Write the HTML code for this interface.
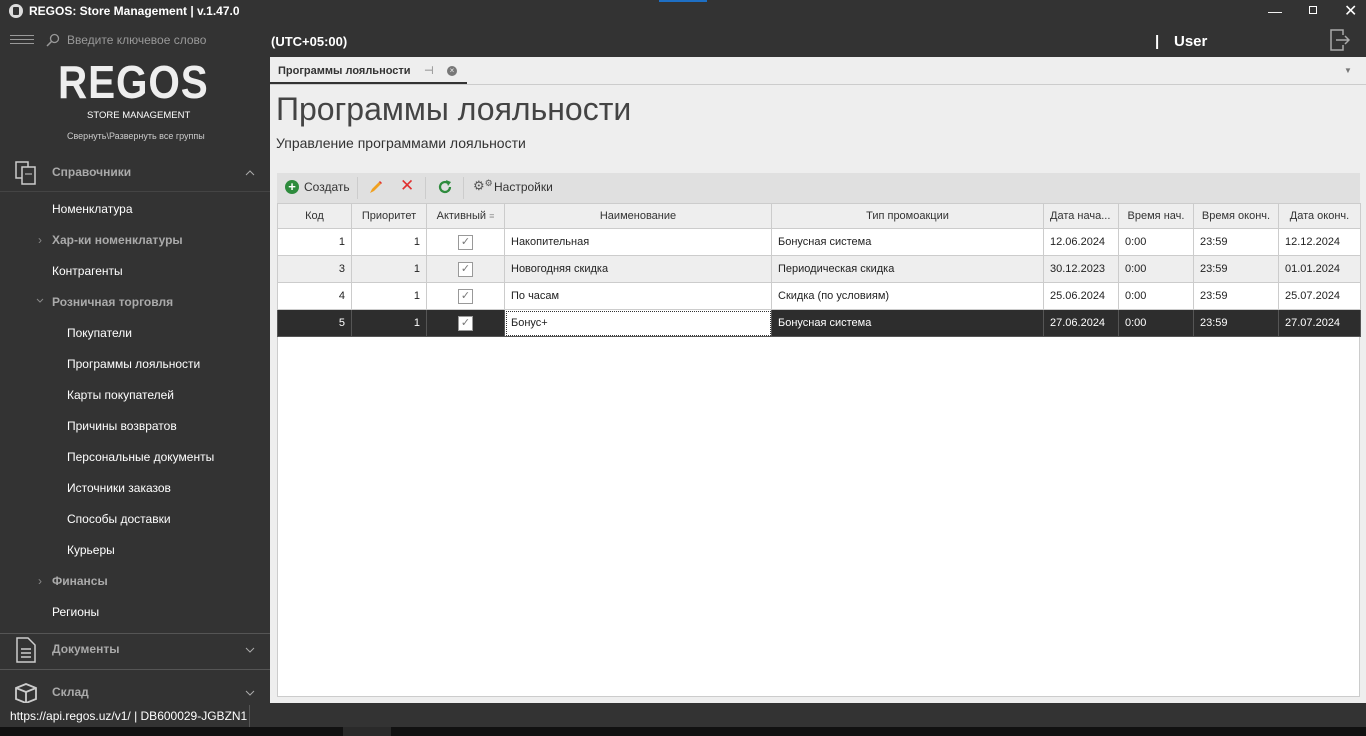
<!DOCTYPE html>
<html><head><meta charset="utf-8"><style>
*{margin:0;padding:0;box-sizing:border-box}
body{width:1366px;height:736px;overflow:hidden;background:#333;font-family:"Liberation Sans",sans-serif;position:relative;font-size:12px}
.a{position:absolute;white-space:nowrap}
.side{left:0;top:22px;width:270px;height:681px;background:#333}
.si{position:absolute;left:52px;color:#fff;font-size:12px}
.sg{color:#aaa;font-weight:bold}
.sub{left:67px}
.content{left:270px;top:57px;width:1096px;height:646px;background:#eee}
table{border-collapse:collapse;position:absolute;left:277px;top:203px;width:1083px;table-layout:fixed;font-size:11px;color:#222}
td,th{border:1px solid #ccc;height:27px;padding:0 6px;overflow:hidden;white-space:nowrap}
th{font-weight:normal;height:25px;background:#eee;color:#333}
tr.w td{background:#fff}
tr.g td{background:#eee}
tr.s td{background:#2d2d2d;color:#fff;border-color:#555}
.r{text-align:right}
.c{text-align:center}
.cb{display:inline-block;width:15px;height:15px;border:1px solid #999;background:#fff;color:#777;font-size:11px;line-height:13px;text-align:center;vertical-align:middle}
</style></head><body>
<div class="side a"></div>
<div class="a" style="left:0;top:0;width:1366px;height:22px;background:#333"></div>
<div class="a" style="left:659px;top:0;width:48px;height:2px;background:#1e6fc4"></div>
<div class="a" style="left:9px;top:4px;width:14px;height:14px;border-radius:50%;background:#ddd"></div>
<div class="a" style="left:13px;top:7px;width:6px;height:8px;background:#333;border-radius:1px"></div>
<div class="a" style="left:29px;top:4px;color:#fff;font-weight:bold;font-size:12px">REGOS: Store Management | v.1.47.0</div>
<div class="a" style="left:1268px;top:0;color:#fff;font-size:14px;line-height:22px">&#8212;</div>
<div class="a" style="left:1309px;top:6px;width:8px;height:8px;border:1.5px solid #fff"></div>
<div class="a" style="left:1344px;top:1px;color:#fff;font-size:16px">&#10005;</div>
<div class="a" style="left:10px;top:35px;width:24px;height:1px;background:#999;box-shadow:0 4px 0 #999,0 8px 0 #999"></div>
<svg class="a" style="left:46px;top:33px" width="14" height="14"><circle cx="8.5" cy="5.5" r="4" fill="none" stroke="#999" stroke-width="1.3"/><line x1="5.5" y1="8.5" x2="1" y2="13" stroke="#999" stroke-width="1.5"/></svg>
<div class="a" style="left:67px;top:33px;color:#999;font-size:12px">Введите ключевое слово</div>
<div class="a" style="left:58px;top:58px;color:#eee;font-size:46px;font-weight:bold;letter-spacing:1px;line-height:48px;transform:scaleX(0.88);transform-origin:left">REGOS</div>
<div class="a" style="left:87px;top:110px;color:#fff;font-size:9.5px">STORE MANAGEMENT</div>
<div class="a" style="left:67px;top:131px;color:#ccc;font-size:9px">Свернуть\Развернуть все группы</div>
<svg class="a" style="left:15px;top:161px" width="22" height="24"><rect x="1" y="1" width="12" height="16" fill="none" stroke="#ccc" stroke-width="1.5"/><rect x="7" y="6" width="13" height="17" fill="#333" stroke="#ccc" stroke-width="1.5"/><line x1="10" y1="13" x2="17" y2="13" stroke="#ccc"/></svg>
<div class="si sg" style="top:165px;font-size:12px">Справочники</div>
<svg class="a" style="left:245px;top:170px" width="10" height="6"><path d="M1 5L5 1L9 5" fill="none" stroke="#aaa"/></svg>
<div class="a" style="left:0;top:191px;width:270px;height:1px;background:#444"></div>
<div class="si" style="top:202px">Номенклатура</div>
<div class="a" style="left:38px;top:233px;color:#888">›</div>
<div class="si sg" style="top:233px">Хар-ки номенклатуры</div>
<div class="si" style="top:264px">Контрагенты</div>
<svg class="a" style="left:36px;top:298px" width="8" height="5"><path d="M1 1L4 4L7 1" fill="none" stroke="#888"/></svg>
<div class="si sg" style="top:295px">Розничная торговля</div>
<div class="si sub" style="top:326px">Покупатели</div>
<div class="si sub" style="top:357px">Программы лояльности</div>
<div class="si sub" style="top:388px">Карты покупателей</div>
<div class="si sub" style="top:419px">Причины возвратов</div>
<div class="si sub" style="top:450px">Персональные документы</div>
<div class="si sub" style="top:481px">Источники заказов</div>
<div class="si sub" style="top:512px">Способы доставки</div>
<div class="si sub" style="top:543px">Курьеры</div>
<div class="a" style="left:38px;top:574px;color:#888">›</div>
<div class="si sg" style="top:574px">Финансы</div>
<div class="si" style="top:605px">Регионы</div>
<div class="a" style="left:0;top:633px;width:270px;height:1px;background:#555"></div>
<svg class="a" style="left:16px;top:637px" width="20" height="26"><path d="M1 1H12L19 8V25H1Z" fill="none" stroke="#ccc" stroke-width="1.5"/><path d="M5 12H15M5 16H15M5 20H15" stroke="#ccc" stroke-width="1.5"/></svg>
<div class="si sg" style="top:642px">Документы</div>
<svg class="a" style="left:245px;top:647px" width="10" height="6"><path d="M1 1L5 5L9 1" fill="none" stroke="#aaa"/></svg>
<div class="a" style="left:0;top:669px;width:270px;height:1px;background:#555"></div>
<svg class="a" style="left:14px;top:682px" width="24" height="22"><path d="M2 6L12 2L22 6V17L12 21L2 17Z M2 6L12 10L22 6 M12 10V21" fill="none" stroke="#ccc" stroke-width="1.8"/></svg>
<div class="si sg" style="top:685px">Склад</div>
<svg class="a" style="left:245px;top:690px" width="10" height="6"><path d="M1 1L5 5L9 1" fill="none" stroke="#aaa"/></svg>
<div class="a" style="left:271px;top:34px;color:#fff;font-weight:bold;font-size:13px">(UTC+05:00)</div>
<div class="a" style="left:1155px;top:33px;color:#fff;font-size:15px;font-weight:bold">|</div>
<div class="a" style="left:1174px;top:33px;color:#fff;font-size:15px;font-weight:bold">User</div>
<svg class="a" style="left:1330px;top:29px" width="20" height="22"><path d="M13 6V1H1V21H13V16" fill="none" stroke="#aaa" stroke-width="1.5"/><path d="M6 11H19M15 7L19 11L15 15" fill="none" stroke="#aaa" stroke-width="1.5"/></svg>
<div class="content a"></div>
<div class="a" style="left:270px;top:84px;width:1096px;height:1px;background:#ccc"></div>
<div class="a" style="left:270px;top:82px;width:197px;height:2px;background:#333"></div>
<div class="a" style="left:278px;top:65px;color:#333;font-weight:bold;font-size:11px">Программы лояльности</div>
<div class="a" style="left:424px;top:64px;color:#777;font-size:11px">&#8867;</div>
<div class="a" style="left:447px;top:66px;width:10px;height:10px;border-radius:50%;background:#777;color:#eee;font-size:8px;line-height:10px;text-align:center">×</div>
<div class="a" style="left:1344px;top:66px;color:#777;font-size:8px">&#9660;</div>
<div class="a" style="left:276px;top:91px;color:#444;font-size:32px">Программы лояльности</div>
<div class="a" style="left:276px;top:135px;color:#333;font-size:14px">Управление программами лояльности</div>
<div class="a" style="left:277px;top:173px;width:1083px;height:30px;background:#e0e0e0"></div>
<div class="a" style="left:285px;top:180px;width:14px;height:14px;border-radius:50%;background:#2e8b3d;color:#fff;font-weight:bold;font-size:13px;line-height:14px;text-align:center">+</div>
<div class="a" style="left:304px;top:180px;color:#333;font-size:12px">Создать</div>
<div class="a" style="left:357px;top:177px;width:1px;height:22px;background:#ccc"></div>
<svg class="a" style="left:369px;top:180px" width="14" height="14"><path d="M1 13L3 9L10 2L12 4L5 11Z" fill="#f0a020"/><path d="M10 2L12 4L13 3L11 1Z" fill="#e03030"/></svg>
<div class="a" style="left:400px;top:176px;color:#e03030;font-size:17px">&#10005;</div>
<div class="a" style="left:425px;top:177px;width:1px;height:22px;background:#ccc"></div>
<svg class="a" style="left:437px;top:179px" width="16" height="16"><path d="M13 8A5 5 0 1 1 11 4" fill="none" stroke="#2e8b3d" stroke-width="2.2"/><path d="M9 1L14 3L11 7Z" fill="#2e8b3d"/></svg>
<div class="a" style="left:463px;top:177px;width:1px;height:22px;background:#ccc"></div>
<div class="a" style="left:473px;top:178px;color:#555;font-size:13px">&#9881;<span style="font-size:9px;vertical-align:top">&#9881;</span></div>
<div class="a" style="left:494px;top:180px;color:#333;font-size:12px">Настройки</div>
<div class="a" style="left:277px;top:203px;width:1083px;height:494px;background:#fff;border:1px solid #ccc"></div>
<table>
<colgroup><col style="width:74px"><col style="width:75px"><col style="width:78px"><col style="width:267px"><col style="width:272px"><col style="width:75px"><col style="width:75px"><col style="width:85px"><col style="width:82px"></colgroup>
<tr><th>Код</th><th>Приоритет</th><th>Активный <span style="color:#999;font-size:9px">&#8801;</span></th><th>Наименование</th><th>Тип промоакции</th><th style="text-align:left">Дата нача...</th><th>Время нач.</th><th>Время оконч.</th><th>Дата оконч.</th></tr>
<tr class="w"><td class="r">1</td><td class="r">1</td><td class="c"><span class="cb">✓</span></td><td>Накопительная</td><td>Бонусная система</td><td>12.06.2024</td><td>0:00</td><td>23:59</td><td>12.12.2024</td></tr>
<tr class="g"><td class="r">3</td><td class="r">1</td><td class="c"><span class="cb">✓</span></td><td>Новогодняя скидка</td><td>Периодическая скидка</td><td>30.12.2023</td><td>0:00</td><td>23:59</td><td>01.01.2024</td></tr>
<tr class="w"><td class="r">4</td><td class="r">1</td><td class="c"><span class="cb">✓</span></td><td>По часам</td><td>Скидка (по условиям)</td><td>25.06.2024</td><td>0:00</td><td>23:59</td><td>25.07.2024</td></tr>
<tr class="s"><td class="r">5</td><td class="r">1</td><td class="c"><span class="cb">✓</span></td><td style="background:#fff;color:#222;outline:1px dotted #333;outline-offset:-2px">Бонус+</td><td>Бонусная система</td><td>27.06.2024</td><td>0:00</td><td>23:59</td><td>27.07.2024</td></tr>
</table>
<div class="a" style="left:0;top:703px;width:1366px;height:24px;background:#333"></div>
<div class="a" style="left:10px;top:709px;color:#fff;font-size:12px">https://api.regos.uz/v1/ | DB600029-JGBZN1</div>
<div class="a" style="left:249px;top:705px;width:1px;height:22px;background:#555"></div>
<div class="a" style="left:0;top:727px;width:1366px;height:9px;background:#111"></div>
<div class="a" style="left:343px;top:727px;width:48px;height:9px;background:#2a2a2a"></div>
</body></html>
